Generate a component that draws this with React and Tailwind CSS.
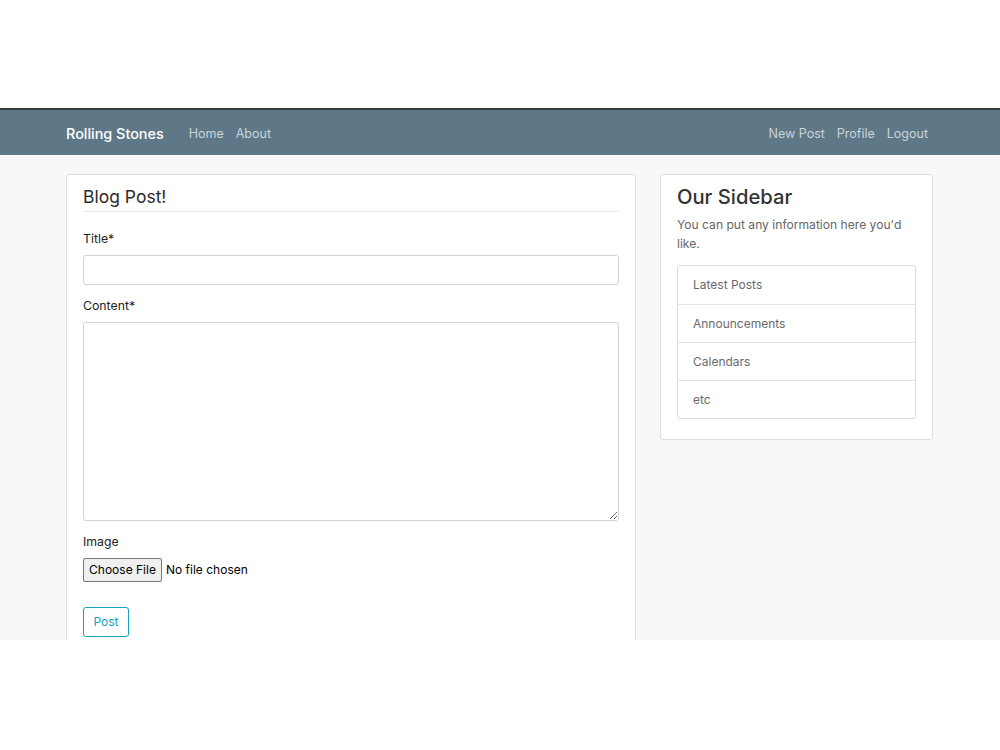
import React from "react";

const navLink = "text-[12.5px] text-[#c9d3da] hover:text-white";

const Navbar = () => (
  <nav className="h-[45px] bg-[#5e7888] flex items-center px-[66px] pt-[3px] shrink-0">
    <span className="text-[14.4px] font-medium text-white mr-[25px]">Rolling Stones</span>
    <div className="flex gap-[12px]">
      <a className={navLink}>Home</a>
      <a className={navLink}>About</a>
    </div>
    <div className="ml-auto flex gap-[12px] mr-[6px]">
      <a className={navLink}>New Post</a>
      <a className={navLink}>Profile</a>
      <a className={navLink}>Logout</a>
    </div>
  </nav>
);

const PostForm = () => (
  <div className="w-[570px] bg-white border border-[#dfdfdf] rounded-[3px] px-[16px] pt-[10px] pb-[16px] text-[#222]">
    <h2 className="text-[17.5px] leading-[24px] text-[#2b2b2b] pb-[2px] border-b border-[#e6e9ec]">Blog Post!</h2>
    <label className="block mt-[17px] text-[12.3px] leading-[20px]">Title*</label>
    <input
      type="text"
      className="block w-full h-[30px] mt-[6px] border border-[#d4d4d4] rounded-[3px] bg-white"
    />
    <label className="block mt-[11px] text-[12.3px] leading-[20px]">Content*</label>
    <textarea className="block w-full h-[199px] mt-[6px] border border-[#d4d4d4] rounded-[3px] bg-white" />
    <label className="block mt-[11px] text-[12.3px] leading-[20px]">Image</label>
    <div className="flex items-center mt-[6px] text-[12px]">
      <span className="h-[24px] w-[79px] justify-center flex items-center bg-[#efefef] border border-[#767676] rounded-[2px] text-black">
        Choose File
      </span>
      <span className="ml-[4px] text-black">No file chosen</span>
    </div>
    <button className="mt-[25px] h-[30px] w-[46px] text-[12px] text-[#17a2b8] border border-[#17a2b8] rounded-[3px] bg-white">
      Post
    </button>
  </div>
);

const Sidebar = () => (
  <div className="w-[273px] bg-white border border-[#dfdfdf] rounded-[3px] px-[16px] pt-[8px] pb-[20px] self-start">
    <h3 className="text-[20.2px] leading-[28px] font-medium text-[#333]">Our Sidebar</h3>
    <p className="mt-[4px] text-[12.1px] leading-[19px] text-[#666]">
      You can put any information here you'd like.
    </p>
    <ul className="mt-[12px] border border-[#dcdcdc] rounded-[3px]">
      {["Latest Posts", "Announcements", "Calendars", "etc"].map((item, i) => (
        <li
          key={item}
          className={`h-[38px] flex items-center px-[15px] text-[12px] text-[#6a6a6a] ${i > 0 ? "border-t border-[#e2e2e2]" : ""}`}
        >
          {item}
        </li>
      ))}
    </ul>
  </div>
);

export default function App() {
  return (
    <div className="w-[1000px] h-[750px] bg-white flex flex-col" style={{ fontFamily: "Inter, 'Liberation Sans', sans-serif" }}>
      <div className="h-[108px] shrink-0" />
      <div className="h-[532px] overflow-hidden bg-[#f8f8f8] border-t-[2px] border-[#3a3a3a] flex flex-col">
        <Navbar />
        <main className="flex gap-[24px] pl-[66px] pt-[19px]">
          <PostForm />
          <Sidebar />
        </main>
      </div>
    </div>
  );
}
